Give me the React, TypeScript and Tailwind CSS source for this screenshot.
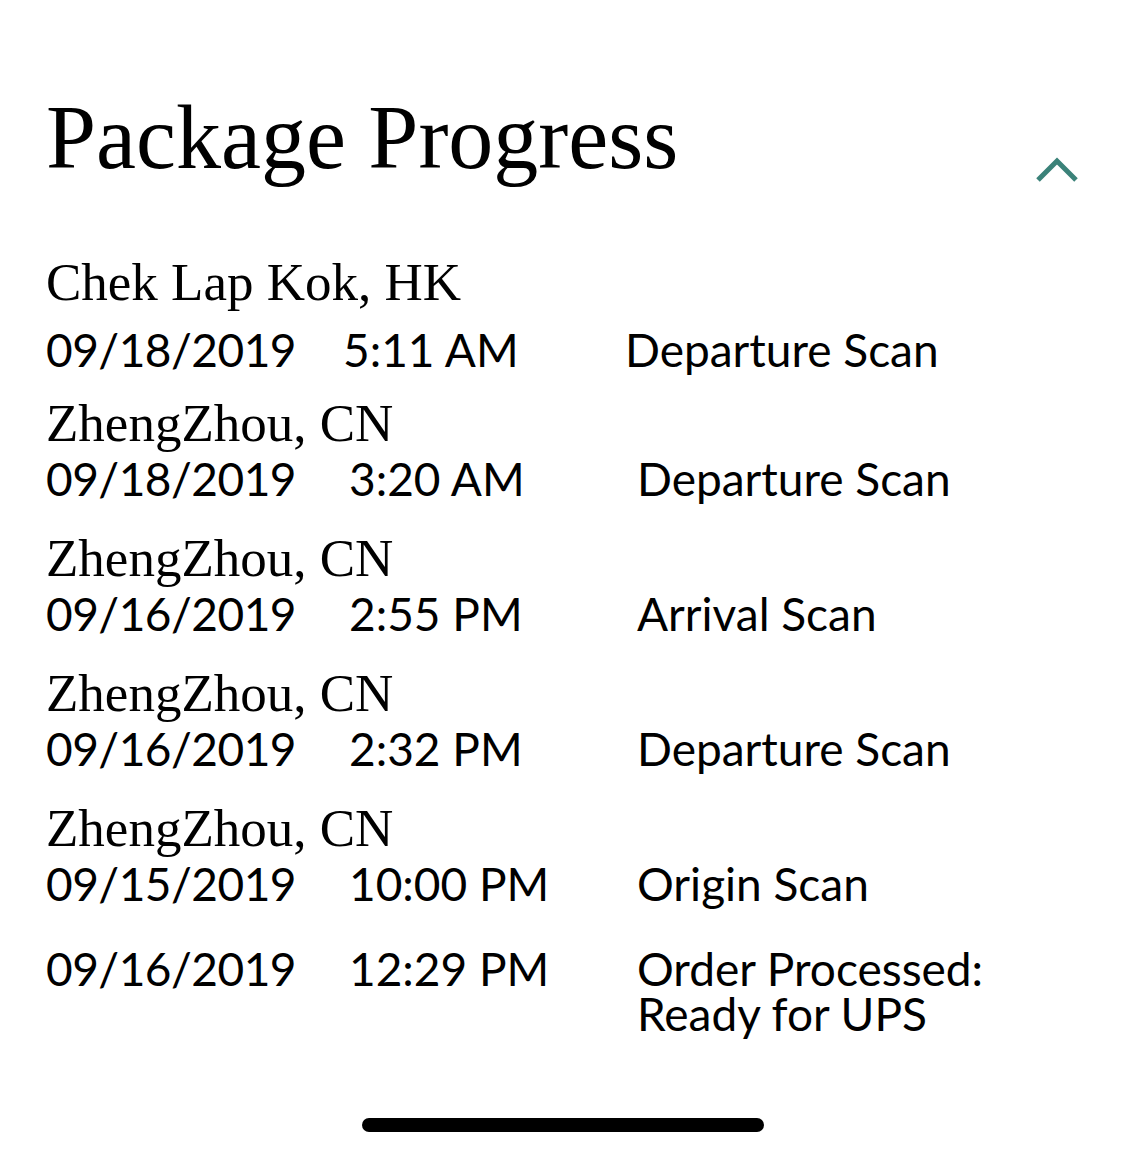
const serif = "font-['Liberation_Serif','Times_New_Roman',serif]"
const sans = "font-['Lato','Noto_Sans',sans-serif]"

type Scan = {
  place: string
  date: string
  time: string
  status: string
}

const scans: Scan[] = [
  { place: "ZhengZhou, CN", date: "09/18/2019", time: "3:20 AM", status: "Departure Scan" },
  { place: "ZhengZhou, CN", date: "09/16/2019", time: "2:55 PM", status: "Arrival Scan" },
  { place: "ZhengZhou, CN", date: "09/16/2019", time: "2:32 PM", status: "Departure Scan" },
  { place: "ZhengZhou, CN", date: "09/15/2019", time: "10:00 PM", status: "Origin Scan" },
]

const App = () => {
  return (
    <div className="w-[1125px] h-[1157px] bg-white text-black overflow-hidden">
      {/* header */}
      <div className="flex items-start justify-between pt-[88px] pl-[46px] pr-[44px]">
        <h1 className={`${serif} text-[90px] leading-[100px]`}>Package Progress</h1>
        <svg width="48" height="34" viewBox="0 0 48 34" className="mt-[65px]">
          <polyline points="5,27 24,8 43,27" fill="none" stroke="#3b8279" strokeWidth="5" strokeLinecap="butt" />
        </svg>
      </div>

      <div className="pl-[46px] pr-[44px]">
        {/* latest */}
        <div className={`${serif} text-[53px] leading-[56px] mt-[66px]`}>Chek Lap Kok, HK</div>
        <div className={`${sans} text-[46px] leading-[56px] mt-[12px] grid grid-cols-[297px_282px_1fr]`}>
          <span className="tracking-[-0.5px]">09/18/2019</span>
          <span>5:11 AM</span>
          <span>Departure Scan</span>
        </div>

        <div className="mt-[17px] flex flex-col gap-[23px]">
          {scans.map((s, i) => (
            <div key={i}>
              <div className={`${serif} text-[53px] leading-[56px]`}>{s.place}</div>
              <div className={`${sans} text-[46px] leading-[56px] grid grid-cols-[303px_288px_1fr]`}>
                <span className="tracking-[-0.5px]">{s.date}</span>
                <span>{s.time}</span>
                <span>{s.status}</span>
              </div>
            </div>
          ))}
        </div>

        <div className={`${sans} text-[46px] leading-[56px] mt-[29px] grid grid-cols-[303px_288px_1fr] items-start`}>
          <span className="tracking-[-0.5px]">09/16/2019</span>
          <span>12:29 PM</span>
          <span className="leading-[45px] mt-[5px]">
            Order Processed:
            <br />
            Ready for UPS
          </span>
        </div>
      </div>

      {/* home indicator */}
      <div className="mt-[82px] mx-auto w-[402px] h-[14px] rounded-full bg-black" />
    </div>
  )
}

export default App
